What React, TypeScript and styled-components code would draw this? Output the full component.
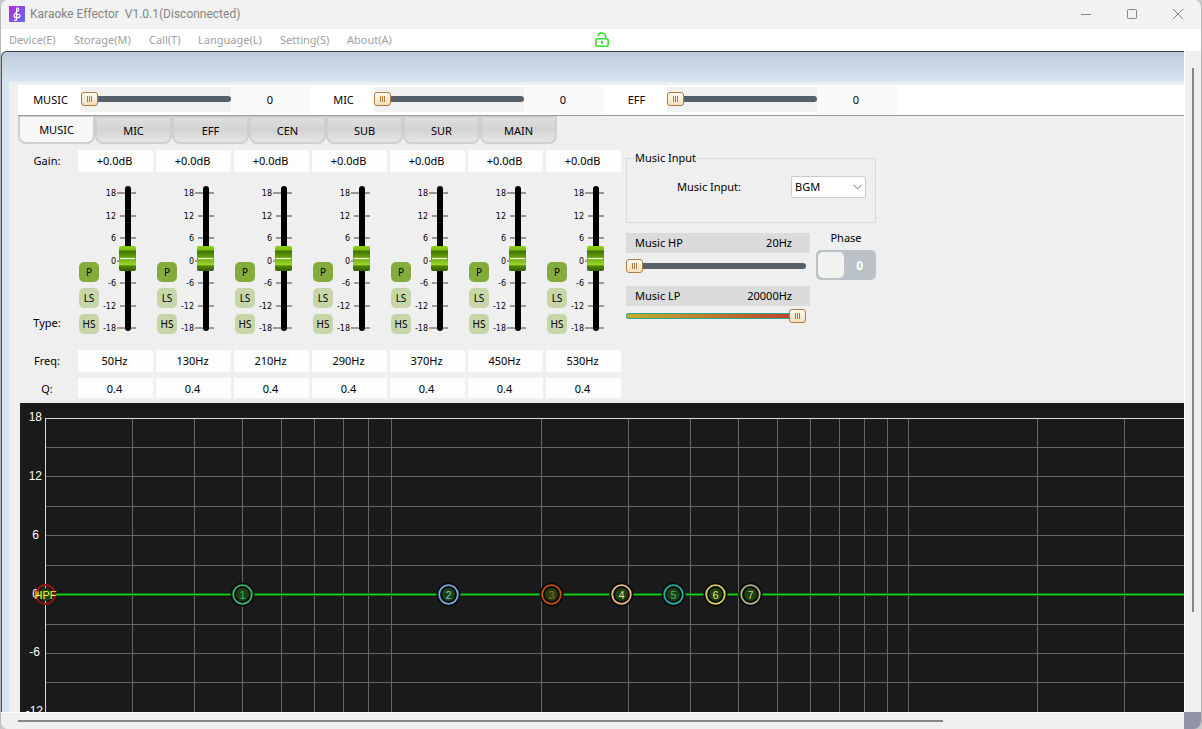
import React, { useState } from "react";
import styled, { createGlobalStyle, css } from "styled-components";

const Global = createGlobalStyle`
  * { box-sizing: border-box; }
  html, body, #root { height: 100%; }
  body { margin: 0; background: #c9c9c9; overflow: hidden; }
  body, button, input, select { font-family: "Noto Sans", "Open Sans", sans-serif; font-size: 11px; color: #000; }
`;

const Window = styled.div`
  height: 100vh;
  display: flex;
  flex-direction: column;
  background: #f0f0f0;
  border-radius: 8px;
  border-left: 1px solid #b8b8b8;
  border-right: 1px solid #b8b8b8;
  overflow: hidden;
`;

const TitleBar = styled.header`
  flex: none;
  height: 29px;
  display: flex;
  align-items: center;
  padding: 0 15px 2px 8px;
  background: #f2f2f2;
`;

const Title = styled.h1`
  margin: 0 auto 0 5px;
  font-family: Roboto, "Noto Sans", sans-serif;
  font-size: 12px;
  font-weight: 400;
  color: #858585;
  white-space: pre;
`;

const WindowButtons = styled.div`
  display: flex;
  gap: 30px;
`;

const WindowButton = styled.button`
  width: 16px;
  height: 16px;
  padding: 0;
  border: 0;
  background: none;
  display: flex;
`;

const MenuBar = styled.nav`
  flex: none;
  height: 22px;
  display: flex;
  align-items: center;
  padding-left: 8px;
  gap: 16px;
  background: #fff;
`;

const MenuItem = styled.button<{ $width: number }>`
  flex: none;
  width: ${(p) => p.$width}px;
  padding: 0 0 2px;
  border: 0;
  background: none;
  color: #a0a0a0;
  text-align: left;
  white-space: nowrap;
`;

const LockButton = styled.button`
  margin-left: 182px;
  width: 16px;
  height: 18px;
  padding: 0;
  border: 0;
  background: none;
  display: flex;
`;

const Body = styled.div`
  flex: 1;
  min-height: 0;
  display: grid;
  grid-template-columns: minmax(0, 1fr) 17px;
  grid-template-rows: minmax(0, 1fr) 17px;
`;

const Client = styled.main`
  min-height: 0;
  display: flex;
  flex-direction: column;
  overflow: hidden;
  border-top: 1px solid #3c4450;
  border-left: 1px solid #4b5158;
  border-top-left-radius: 6px;
  background: linear-gradient(#bccbdb, #d8e4f0 29px, #d8e4f0);
  padding: 30px 0 0 7px;
`;

const Panel = styled.div`
  flex: 1;
  min-height: 0;
  display: flex;
  flex-direction: column;
  background: #efefef;
  padding-top: 3px;
`;

const VolumeBar = styled.section`
  flex: none;
  height: 31px;
  margin-left: 9px;
  display: flex;
  background: #fff;
  border-bottom: 1px solid #999;
`;

const VolumeGroup = styled.div`
  width: 293px;
  height: 29px;
  display: grid;
  grid-template-columns: 63px 150px 80px;
  align-items: center;
`;

const VolumeLabel = styled.label`
  padding-left: 2px;
  text-align: center;
`;

const VolumeTrack = styled.div`
  height: 25px;
  display: flex;
  align-items: center;
  padding-bottom: 1px;
  background: #f1f1ef;
`;

const VolumeValue = styled.output`
  height: 28px;
  line-height: 28px;
  padding-right: 2px;
  background: #fafafa;
  text-align: center;
`;

const thumb = css`
  appearance: none;
  width: 17px;
  height: 14px;
  margin-top: -4px;
  border: 1px solid #b07c45;
  border-radius: 3px;
  background:
    linear-gradient(#b5763c, #b5763c) 5px 3px / 1px 6px no-repeat,
    linear-gradient(#b5763c, #b5763c) 7px 3px / 1px 6px no-repeat,
    linear-gradient(#b5763c, #b5763c) 9px 3px / 1px 6px no-repeat,
    linear-gradient(#fffaf2, #f5dfb9);
`;

const Range = styled.input<{ $warm?: boolean }>`
  appearance: none;
  width: 100%;
  height: 14px;
  margin: 0;
  background: none;
  &::-webkit-slider-runnable-track {
    height: 6px;
    border-radius: 3px;
    background: ${(p) => (p.$warm ? "linear-gradient(90deg, #c0b030, #c0392b)" : "#566068")};
    ${(p) => p.$warm && "box-shadow: inset 0 0 0 1px #28a88c;"}
  }
  &::-webkit-slider-thumb {
    ${thumb}
  }
`;

const TabList = styled.div`
  flex: none;
  height: 29px;
  margin-left: 9px;
  display: flex;
`;

const Tab = styled.button<{ $active: boolean }>`
  width: 77px;
  height: 28px;
  padding: 0;
  border: 2px solid #cfcfcf;
  border-top-width: ${(p) => (p.$active ? 1 : 2)}px;
  border-radius: 0 0 8px 8px;
  background: ${(p) => (p.$active ? "#f7f7f7" : "linear-gradient(#dedede, #d3d3d3 50%, #e6e6e6)")};
`;

const Controls = styled.section`
  flex: none;
  display: flex;
  padding: 5px 0 5px 11px;
`;

const Legend = styled.div`
  width: 58px;
  display: flex;
  flex-direction: column;
  text-align: center;
  span { height: 22px; line-height: 22px; padding-right: 4px; }
  span:nth-child(2) { margin-top: 140px; }
  span:nth-child(3) { margin-top: 16px; }
  span:nth-child(4) { margin-top: 6px; height: 20px; line-height: 22px; }
`;

const Bands = styled.div`
  display: flex;
  gap: 3px;
`;

const Band = styled.div`
  width: 75px;
  display: flex;
  flex-direction: column;
`;

const Field = styled.input<{ $last?: boolean }>`
  width: 100%;
  height: ${(p) => (p.$last ? 20 : 22)}px;
  margin-top: ${(p) => (p.$last ? 6 : 0)}px;
  padding: 0 2px ${(p) => (p.$last ? 0 : 2)}px 0;
  border: 0;
  background: #fdfdfd;
  text-align: center;
`;

const Strip = styled.div`
  height: 178px;
  display: flex;
`;

const Types = styled.div`
  width: 22px;
  padding: 90px 0 0 1px;
  display: flex;
  flex-direction: column;
  gap: 6px;
`;

const TypeButton = styled.button<{ $on?: boolean }>`
  width: 20px;
  height: 20px;
  padding: 0;
  border: 0;
  border-radius: 5px;
  background: ${(p) => (p.$on ? "#84ac3c" : "#c6d6a8")};
  font-size: 10px;
`;

const Chart = styled.svg`
  flex: 1;
  min-height: 0;
  margin-left: 11px;
  display: block;
  background: #1a1a1a;
`;

const Side = styled.div`
  width: 250px;
  margin: 1px 0 0 5px;
`;

const InputGroup = styled.fieldset`
  height: 72px;
  margin: 0;
  padding: 11px 9px 0 50px;
  border: 1px solid #d9d9d9;
  display: flex;
  align-items: flex-start;
  justify-content: space-between;
  legend { margin-left: -43px; padding: 0 1px; line-height: 14px; }
  label { line-height: 22px; }
`;

const SelectBox = styled.div`
  display: grid;
  align-items: center;
  width: 75px;
  height: 22px;
  > * { grid-area: 1 / 1; }
  svg { justify-self: end; margin-right: 4px; pointer-events: none; }
`;

const Select = styled.select`
  appearance: none;
  width: 75px;
  height: 22px;
  padding: 0 3px 1px;
  border: 1px solid #ccc;
  border-radius: 2px;
  background: #fff;
`;

const Filters = styled.div`
  display: flex;
  justify-content: space-between;
  margin-top: 10px;
`;

const FilterColumn = styled.div`
  width: 184px;
`;

const FilterLabel = styled.label`
  height: 20px;
  display: flex;
  align-items: center;
  justify-content: space-between;
  padding: 0 18px 1px 9px;
  background: #dbdbdb;
`;

const FilterTrack = styled.div<{ $gap: number }>`
  width: 180px;
  display: flex;
  margin: ${(p) => p.$gap}px 0 13px;
`;

const Phase = styled.div`
  width: 60px;
  display: flex;
  flex-direction: column;
  text-align: center;
  line-height: 10px;
`;

const PhaseSwitch = styled.button`
  width: 60px;
  height: 30px;
  margin-top: 7px;
  padding: 2px 13px 2px 2px;
  display: flex;
  align-items: center;
  justify-content: space-between;
  border: 0;
  border-radius: 5px;
  background: #bac1c7;
  color: #fff;
  font-size: 12px;
  font-weight: 700;
  i { width: 26px; height: 26px; border-radius: 5px; background: #f2f2f0; }
`;

const VScroll = styled.div`
  padding: 17px 7px 0 0;
  display: flex;
  justify-content: flex-end;
  background: #efefef;
  border-left: 1px solid #fff;
  i { width: 2px; height: 544px; background: #858585; }
`;

const HScroll = styled.div`
  padding: 7px 241px 0 17px;
  background: #efefef;
  border-top: 1px solid #fff;
  i { display: block; height: 2px; background: #858585; }
`;

const Grip = styled.div`
  background: #9394aa;
`;

const LogoIcon = () => (
  <svg width="16" height="16" viewBox="0 0 16 16">
    <defs>
      <linearGradient id="logo" x1="0" y1="0" x2="1" y2="1">
        <stop offset="0" stopColor="#b32be0" />
        <stop offset="1" stopColor="#5f6cf0" />
      </linearGradient>
    </defs>
    <rect width="16" height="16" fill="url(#logo)" />
    <path d="M7.6 13.2V3.4C7.6 1.2 9.8 1.4 9.6 3.6C9.4 5.6 5 7.2 5 9.8C5 12.4 11 12.4 11 9.8C11 7.6 7.2 7.8 7.4 10M7.6 13.2C7.6 15 5.4 14.8 5.6 13.4" fill="none" stroke="#fff" strokeWidth="1.2" />
  </svg>
);

const LockIcon = () => (
  <svg width="16" height="18" viewBox="0 0 16 18" fill="none" stroke="#30e030" strokeWidth="1.6">
    <rect x="1.8" y="7.8" width="12.4" height="7.4" rx="2" />
    <path d="M4 5C5 .6 11.6 1 11.6 5.6V7.8M8 10.4V13M6.8 10.8H9.2" />
  </svg>
);

const TICKS = [["18", 20, true], ["12", 43, false], ["6", 65, false], ["0", 88, true], ["-6", 110, false], ["-12", 133, false], ["-18", 155, true]] as const;

const Fader = () => (
  <svg width="53" height="178" viewBox="0 0 53 178" role="img" aria-label="Gain 0 dB">
    <defs>
      <linearGradient id="knob" x1="0" y1="0" x2="0" y2="1">
        <stop offset="0" stopColor="#8bd016" />
        <stop offset=".16" stopColor="#7cc010" />
        <stop offset=".2" stopColor="#3f7200" />
        <stop offset=".5" stopColor="#6fab0e" />
        <stop offset=".75" stopColor="#9ad62b" />
        <stop offset=".8" stopColor="#4e8600" />
        <stop offset="1" stopColor="#355e00" />
      </linearGradient>
    </defs>
    {TICKS.map(([t, y, long]) => (
      <g key={t}>
        <path d={`M${long ? 17 : 20} ${y + 1}H36`} stroke="#777" strokeWidth="1.4" />
        <text x="16" y={y + 4} textAnchor="end" fontFamily="DejaVu Sans, sans-serif" fontSize="8">{t}</text>
      </g>
    ))}
    <rect x="25" y="14" width="6" height="145" rx="3" fill="#000" />
    <rect x="19" y="74" width="17" height="25" rx="2" fill="url(#knob)" />
    <path d="M20 86.5H35" stroke="#f2ffd8" strokeWidth="1.3" />
  </svg>
);

const GRID_X = [112, 174, 222, 261, 294, 323, 348, 371, 521, 608, 670, 718, 757, 790, 819, 844, 867, 888, 1017, 1104];
const GRID_Y = [44, 73, 103, 132, 162, 191, 221, 250, 279];
const NODES: [string, number, string, string][] = [
  ["1", 222, "#3cb878", "#3cb878"],
  ["2", 428, "#79a9e6", "#79c4d8"],
  ["3", 531, "#c4501a", "#b06010"],
  ["4", 601, "#f0b888", "#f0d890"],
  ["5", 653, "#20b4ac", "#30b898"],
  ["6", 695, "#e0cc60", "#e8e468"],
  ["7", 730, "#b4b48c", "#b8d080"],
];

const Response = () => (
  <Chart aria-label="Frequency response" fontFamily="Liberation Sans, sans-serif" fontSize="12">
    <g stroke="#666" shapeRendering="crispEdges">
      {GRID_X.map((x) => <line key={x} x1={x + 0.5} x2={x + 0.5} y1="15" y2="100%" />)}
      {GRID_Y.map((y) => <line key={y} x1="25" x2="100%" y1={y + 0.5} y2={y + 0.5} />)}
    </g>
    <g stroke="#d8d8d8" shapeRendering="crispEdges">
      <line x1="25" x2="100%" y1="15.5" y2="15.5" />
      <line x1="25.5" x2="25.5" y1="15" y2="100%" />
    </g>
    <g fill="#fff" textAnchor="end">
      <text x="22" y="18">18</text>
      <text x="22" y="77">12</text>
      <text x="19" y="136">6</text>
      <text x="19" y="195">0</text>
      <text x="20" y="253">-6</text>
      <text x="23" y="312">-12</text>
    </g>
    <line x1="36" x2="100%" y1="191.5" y2="191.5" stroke="#064d06" strokeWidth="3" />
    <line x1="36" x2="100%" y1="191.5" y2="191.5" stroke="#1fd01f" strokeWidth="1.4" />
    <circle cx="25.5" cy="191.5" r="6.5" fill="#1f4010" />
    <circle cx="25.5" cy="191.5" r="9.5" fill="none" stroke="#a01414" strokeWidth="1.8" />
    <text x="25.5" y="196" fill="#f4f440" textAnchor="middle" fontSize="11">HPF</text>
    {NODES.map(([n, x, ring, ink]) => (
      <g key={n}>
        <circle cx={x + 0.5} cy="191.5" r="12" fill="#080c06" />
        <circle cx={x + 0.5} cy="191.5" r="6.5" fill="#1f4010" />
        <circle cx={x + 0.5} cy="191.5" r="9.3" fill="none" stroke={ring} strokeWidth="1.8" />
        <text x={x + 0.5} y="195.5" fill={ink} textAnchor="middle" fontSize="11">{n}</text>
      </g>
    ))}
  </Chart>
);

const MENUS: [string, number][] = [["Device(E)", 49], ["Storage(M)", 59], ["Call(T)", 33], ["Language(L)", 66], ["Setting(S)", 51], ["About(A)", 49]];
const TABS = ["MUSIC", "MIC", "EFF", "CEN", "SUB", "SUR", "MAIN"];
const FREQS = ["50Hz", "130Hz", "210Hz", "290Hz", "370Hz", "450Hz", "530Hz"];

export default function App() {
  const [tab, setTab] = useState("MUSIC");
  return (
    <Window>
      <Global />
      <TitleBar>
        <LogoIcon />
        <Title>{"Karaoke Effector  V1.0.1(Disconnected)"}</Title>
        <WindowButtons>
          <WindowButton aria-label="Minimize"><svg width="16" height="16" stroke="#858585"><path d="M3 8.5H13" /></svg></WindowButton>
          <WindowButton aria-label="Maximize"><svg width="16" height="16" fill="none" stroke="#858585"><rect x="3.5" y="3.5" width="9" height="9" rx="1" /></svg></WindowButton>
          <WindowButton aria-label="Close"><svg width="16" height="16" stroke="#858585"><path d="M3 3L13 13M13 3L3 13" /></svg></WindowButton>
        </WindowButtons>
      </TitleBar>
      <MenuBar>
        {MENUS.map(([m, w]) => <MenuItem key={m} $width={w}>{m}</MenuItem>)}
        <LockButton aria-label="Unlocked"><LockIcon /></LockButton>
      </MenuBar>
      <Body>
        <Client>
          <Panel>
            <VolumeBar>
              {["MUSIC", "MIC", "EFF"].map((v) => (
                <VolumeGroup key={v}>
                  <VolumeLabel htmlFor={"vol-" + v}>{v}</VolumeLabel>
                  <VolumeTrack><Range id={"vol-" + v} type="range" defaultValue={0} /></VolumeTrack>
                  <VolumeValue>0</VolumeValue>
                </VolumeGroup>
              ))}
            </VolumeBar>
            <TabList role="tablist">
              {TABS.map((t) => (
                <Tab key={t} role="tab" aria-selected={t === tab} $active={t === tab} onClick={() => setTab(t)}>{t}</Tab>
              ))}
            </TabList>
            <Controls>
              <Legend>
                <span>Gain:</span>
                <span>Type:</span>
                <span>Freq:</span>
                <span>Q:</span>
              </Legend>
              <Bands>
                {FREQS.map((f) => (
                  <Band key={f}>
                    <Field aria-label={"Gain " + f} defaultValue="+0.0dB" />
                    <Strip>
                      <Types>
                        <TypeButton $on>P</TypeButton>
                        <TypeButton>LS</TypeButton>
                        <TypeButton>HS</TypeButton>
                      </Types>
                      <Fader />
                    </Strip>
                    <Field aria-label={"Frequency " + f} defaultValue={f} />
                    <Field aria-label={"Q " + f} $last defaultValue="0.4" />
                  </Band>
                ))}
              </Bands>
              <Side>
                <InputGroup>
                  <legend>Music Input</legend>
                  <label htmlFor="source">Music Input:</label>
                  <SelectBox>
                    <Select id="source"><option>BGM</option></Select>
                    <svg width="9" height="6" fill="none" stroke="#666"><path d="M.5 .8L4.5 4.8L8.5 .8" /></svg>
                  </SelectBox>
                </InputGroup>
                <Filters>
                  <FilterColumn>
                    <FilterLabel htmlFor="hp"><span>Music HP</span><output>20Hz</output></FilterLabel>
                    <FilterTrack $gap={6}><Range id="hp" type="range" defaultValue={0} /></FilterTrack>
                    <FilterLabel htmlFor="lp"><span>Music LP</span><output>20000Hz</output></FilterLabel>
                    <FilterTrack $gap={3}><Range id="lp" type="range" $warm defaultValue={100} /></FilterTrack>
                  </FilterColumn>
                  <Phase>
                    <span id="phase">Phase</span>
                    <PhaseSwitch role="switch" aria-checked={false} aria-labelledby="phase"><i />0</PhaseSwitch>
                  </Phase>
                </Filters>
              </Side>
            </Controls>
            <Response />
          </Panel>
        </Client>
        <VScroll><i /></VScroll>
        <HScroll><i /></HScroll>
        <Grip />
      </Body>
    </Window>
  );
}
